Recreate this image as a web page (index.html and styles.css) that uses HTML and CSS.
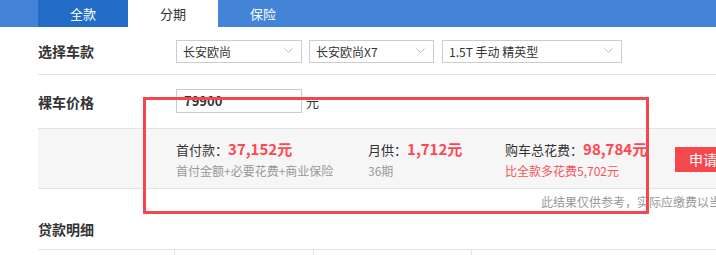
FILE: index.html
```html
<!DOCTYPE html>
<html lang="zh-CN">
<head>
<meta charset="utf-8">
<title>贷款计算器</title>
<link rel="stylesheet" href="styles.css">
</head>
<body>
<div class="page">
  <div class="tabs">
    <a class="tab tab-hover">全款</a>
    <a class="tab tab-current">分期</a>
    <a class="tab">保险</a>
  </div>
  <div class="main">
    <div class="row row-model">
      <div class="label">选择车款</div>
      <div class="selects">
        <div class="select sel-1"><span>长安欧尚</span><svg class="chev" width="9" height="6" viewBox="0 0 9 6"><polyline points="0.5,0.5 4.5,4.5 8.5,0.5" fill="none" stroke="#bbb" stroke-width="1"/></svg></div>
        <div class="select sel-2"><span>长安欧尚X7</span><svg class="chev" width="9" height="6" viewBox="0 0 9 6"><polyline points="0.5,0.5 4.5,4.5 8.5,0.5" fill="none" stroke="#bbb" stroke-width="1"/></svg></div>
        <div class="select sel-3"><span>1.5T 手动 精英型</span><svg class="chev" width="9" height="6" viewBox="0 0 9 6"><polyline points="0.5,0.5 4.5,4.5 8.5,0.5" fill="none" stroke="#bbb" stroke-width="1"/></svg></div>
      </div>
    </div>
    <div class="row row-price">
      <div class="label">裸车价格</div>
      <div class="input">79900</div>
      <span class="unit">元</span>
    </div>
    <div class="result">
      <div class="col col-1">
        <div class="line1">首付款<span class="colon">：</span><b class="num">37,152元</b></div>
        <div class="line2">首付金额+必要花费+商业保险</div>
      </div>
      <div class="col col-2">
        <div class="line1">月供<span class="colon">：</span><b class="num">1,712元</b></div>
        <div class="line2">36期</div>
      </div>
      <div class="col col-3">
        <div class="line1">购车总花费<span class="colon">：</span><b class="num">98,784元</b></div>
        <div class="line2 red">比全款多花费5,702元</div>
      </div>
      <a class="btn">申请贷款</a>
    </div>
    <div class="note">此结果仅供参考，实际应缴费以当地为准</div>
    <div class="section">贷款明细</div>
    <div class="table">
      <div class="cell c1"></div>
      <div class="cell c2"></div>
      <div class="cell c3"></div>
      <div class="cell c4"></div>
    </div>
    <div class="highlight"></div>
  </div>
</div>
</body>
</html>
```
FILE: styles.css
```css
html, body {
  margin: 0;
  padding: 0;
  overflow: hidden;
  background: #fff;
}
body {
  font-family: "Noto Sans CJK SC", "Noto Sans", sans-serif;
  color: #333;
  font-size: 12px;
}
.page {
  width: 1000px;
  position: relative;
}
.tabs {
  display: flex;
  height: 27px;
  background: #4384d9;
  padding-left: 38px;
}
.tab {
  width: 90px;
  text-align: center;
  line-height: 27px;
  font-size: 13px;
  color: #fff;
}
.tab-hover {
  background: #236cc8;
}
.tab-current {
  background: #fff;
  color: #333;
}
.main {
  margin-left: 38px;
}
.row {
  display: flex;
  align-items: center;
  border-bottom: 1px solid #e3e3e3;
}
.row-model {
  height: 47px;
}
.row-price {
  height: 53px;
}
.label {
  width: 138px;
  font-size: 14px;
  font-weight: bold;
  color: #333;
}
.selects {
  display: flex;
  gap: 7px;
}
.select {
  box-sizing: border-box;
  height: 23px;
  border: 1px solid #ccc;
  display: flex;
  align-items: center;
  justify-content: space-between;
  padding: 0 8px 0 6px;
  font-size: 12px;
  color: #333;
  margin-top: 1px;
}
.sel-1 { width: 126px; }
.sel-2 { width: 125px; }
.sel-3 { width: 180px; margin-left: 1px; }
.chev { display: block; }
.input {
  box-sizing: border-box;
  width: 126px;
  height: 24px;
  border: 1px solid #ccc;
  padding-left: 7px;
  line-height: 22px;
  font-size: 13px;
  font-weight: bold;
  color: #333;
  margin-top: -1px;
}
.unit {
  margin-left: 4px;
  font-size: 13px;
  color: #333;
}
.result {
  display: flex;
  align-items: center;
  box-sizing: border-box;
  background: #f6f6f6;
  border-bottom: 1px solid #e3e3e3;
  height: 60px;
  padding-left: 138px;
}
.col {
  padding-top: 2px;
}
.col-1 { width: 192px; }
.col-2 { width: 137px; }
.col-3 { width: 172px; }
.line1 {
  font-size: 13px;
  line-height: 22px;
  color: #333;
}
.num {
  font-size: 15px;
  font-weight: bold;
  color: #ff4653;
}
.line2 {
  font-size: 12px;
  line-height: 20px;
  color: #999;
}
.line2.red {
  color: #f7525b;
}
.btn {
  box-sizing: border-box;
  height: 25px;
  line-height: 25px;
  padding: 0 14px;
  background: #f5484d;
  color: #fff;
  font-size: 14px;
  margin-top: 1px;
  margin-left: -2px;
}
.note {
  line-height: 26px;
  font-size: 12px;
  color: #999;
  padding-left: 503px;
}
.section {
  margin-top: 4px;
  line-height: 20px;
  padding-bottom: 10px;
  font-size: 14px;
  font-weight: bold;
  color: #333;
}
.table {
  display: flex;
  border-top: 1px solid #e3e3e3;
  height: 30px;
}
.cell {
  border-right: 1px solid #e3e3e3;
}
.c1 { width: 136px; }
.c2 { width: 138px; }
.c3 { width: 157px; }
.c4 { flex: 1; border-right: none; }
.highlight {
  position: absolute;
  left: 143px;
  top: 97px;
  width: 506px;
  height: 117px;
  box-sizing: border-box;
  border: 3px solid #f5464e;
}
```
